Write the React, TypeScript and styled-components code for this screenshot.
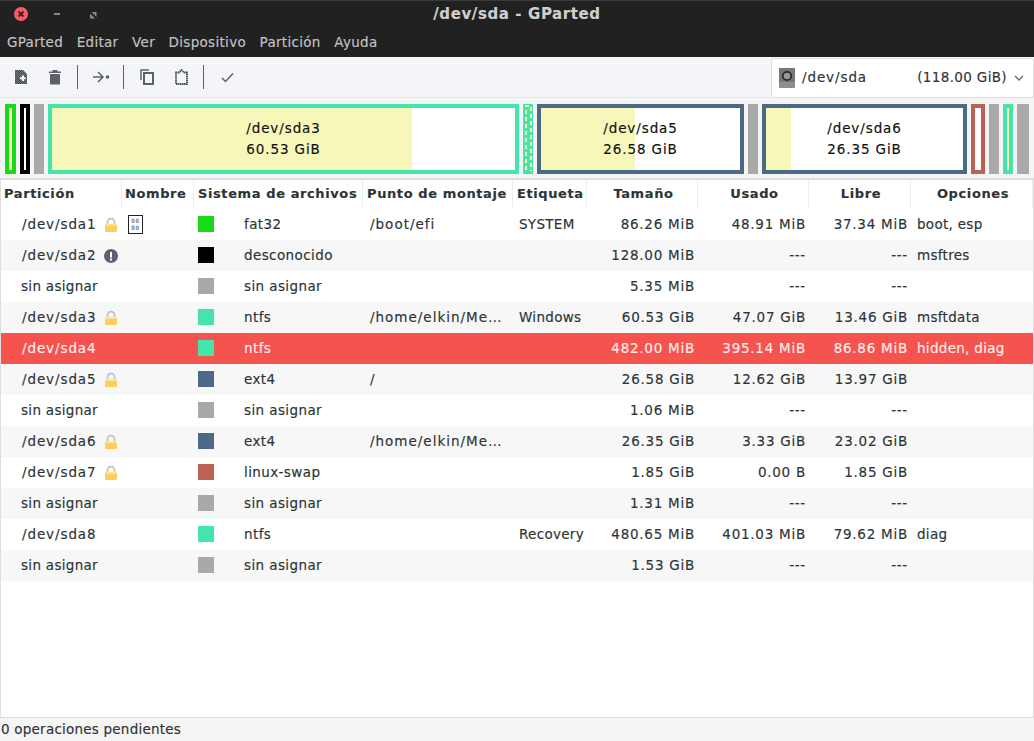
import React from "react";
import styled, { createGlobalStyle } from "styled-components";

const Global = createGlobalStyle`
  html, body { margin: 0; padding: 0; background: #fff; }
  body { font-family: "DejaVu Sans", "Liberation Sans", sans-serif; font-size: 13.5px; color: #2e3436; -webkit-text-stroke: 0.15px; }
  #root { width: 1034px; height: 741px; overflow: hidden; }
`;

const Win = styled.div`
  display: flex; flex-direction: column; width: 1034px; height: 741px; background: #fff;
`;
const TitleBar = styled.div`
  height: 57px; background: #212121; border-top: 1px solid #3a3a3a; box-sizing: border-box;
  display: flex; flex-direction: column; flex: none;
`;
const TitleRow = styled.div`
  position: relative; height: 27px; display: flex; align-items: flex-start; justify-content: center; flex: none;
`;
const Title = styled.div`
  color: #cfcfcf; font-weight: 700; font-size: 15px; letter-spacing: 0.6px; line-height: 24px; margin-top: 1px;
`;
const WinButtons = styled.svg`
  position: absolute; left: 0; top: 0;
`;
const MenuBar = styled.div`
  display: flex; gap: 13.6px; padding: 0 0 2px 7px; height: 29px; box-sizing: border-box; align-items: center;
`;
const MenuItem = styled.span`
  color: #c2c2c2; font-size: 13.5px; letter-spacing: .3px; line-height: 20px;
`;
const Toolbar = styled.div`
  height: 41px; flex: none; box-sizing: border-box; background: #f4f5f8; border-bottom: 1px solid #e3e8ee;
  display: flex; align-items: flex-start; position: relative;
`;
const Tools = styled.div`
  display: flex; align-items: center; height: 40px; padding-left: 4px; flex: 1;
`;
const ToolBtn = styled.div<{ $w: number }>`
  width: ${p => p.$w}px; height: 40px; display: flex; align-items: center; justify-content: center; flex: none;
`;
const ToolSep = styled.div`
  width: 1px; height: 24px; background: #5c616c; flex: none;
`;
const Combo = styled.div`
  width: 263px; height: 40px; margin-top: 1px; box-sizing: border-box; flex: none; background: #fff; border: 1px solid #dfe1e5;
  border-radius: 2px; display: flex; align-items: center; padding: 0 9px 0 7px;
`;
const ComboName = styled.span`
  margin-left: 7px; flex: 1; letter-spacing: .9px; padding-bottom: 2px;
`;
const ComboSize = styled.span`
  margin-right: 7px; letter-spacing: .35px; color: #333; padding-bottom: 2px;
`;
const MapBar = styled.div`
  height: 82px; flex: none; box-sizing: border-box; background: #f5f5f5; border-bottom: 2px solid #dedede;
  display: flex; gap: 4px; padding: 6px 0 0 5px;
`;
const Seg = styled.div<{ $w: number; $c: string }>`
  position: relative; width: ${p => p.$w}px; height: 70px; flex: none; box-sizing: border-box;
  border: 4px solid ${p => p.$c}; background: #fff;
`;
const Free = styled.div<{ $w: number }>`
  width: ${p => p.$w}px; height: 70px; flex: none; background: #a9a9a9;
`;
const Used = styled.div<{ $w: number }>`
  position: absolute; left: 0; top: 0; bottom: 0; width: ${p => p.$w}px; background: #f8f7ba;
`;
const Dotted = styled.div`
  position: absolute; inset: -4px; background:
    linear-gradient(#f8f7ba, #f8f7ba) 2px 1px/4px 2px no-repeat,
    repeating-linear-gradient(to bottom, #f8f7ba 0 4px, #43e5ac 4px 7px) 2px 6px/2px 60px no-repeat,
    repeating-linear-gradient(to bottom, #f8f7ba 0 4px, #43e5ac 4px 7px) 7px 3px/2px 64px no-repeat,
    #43e5ac;
`;
const SegLabel = styled.div`
  position: absolute; inset: 0; display: flex; flex-direction: column; align-items: center; justify-content: center;
  color: #111; line-height: 21px; letter-spacing: .9px;
`;
const Table = styled.div`
  flex: 1; min-height: 0; display: flex; flex-direction: column; background: #fff;
  border-left: 1px solid #dedede; border-right: 1px solid #dedede;
`;
const cols = "121px 72px 169px 150px 74px 111px 111px 102px 122px";
const HeadRow = styled.div`
  display: grid; grid-template-columns: ${cols}; height: 29px; flex: none;
`;
const HeadCell = styled.div<{ $center?: boolean; $pl: number }>`
  display: flex; align-items: center; box-sizing: border-box; padding: 0 0 2px ${p => p.$pl}px; font-weight: 700; font-size: 13px;
  letter-spacing: .6px; color: #2e3436; white-space: nowrap; overflow: hidden;
  border-right: 1px solid #ededed; justify-content: ${p => (p.$center ? "center" : "flex-start")};
`;
const Row = styled.div<{ $alt?: boolean; $sel?: boolean }>`
  display: grid; grid-template-columns: ${cols}; height: 31px; flex: none; align-items: center;
  background: ${p => (p.$sel ? "#f5544e" : p.$alt ? "#f7f7f7" : "#fff")};
  color: ${p => (p.$sel ? "#fdeeee" : "#2e3436")};
`;
const Cell = styled.div<{ $right?: boolean; $path?: boolean }>`
  box-sizing: border-box; white-space: nowrap; overflow: hidden; padding-bottom: 1px;
  letter-spacing: ${p => (p.$right ? ".75px" : p.$path ? "1px" : ".3px")};
  padding-left: ${p => (p.$path ? 7 : 6)}px; padding-right: ${p => (p.$right ? 3 : 0)}px;
  text-align: ${p => (p.$right ? "right" : "left")};
`;
const PartCell = styled.div<{ $path?: boolean }>`
  display: flex; align-items: center; padding: 0 0 1px ${p => (p.$path ? 21 : 20)}px; box-sizing: border-box; position: relative;
  white-space: nowrap; letter-spacing: ${p => (p.$path ? ".9px" : ".3px")};
`;
const PartIcon = styled.span`
  position: absolute; left: 103px; top: 50%; transform: translateY(-50%); display: flex;
`;
const FsCell = styled.div`
  display: flex; align-items: center; padding: 0 0 1px 4px; white-space: nowrap; letter-spacing: .4px;
`;
const Swatch = styled.span<{ $c: string }>`
  width: 16px; height: 16px; background: ${p => p.$c}; flex: none; margin-right: 30px;
`;
const HexBox = styled.div`
  margin-left: 6px; width: 15px; height: 19px; box-sizing: border-box; border: 1px solid #222; background: #fff;
  font-family: "DejaVu Sans Mono", monospace; font-size: 6px; line-height: 7px; text-align: center; color: #444;
  padding-top: 1px; letter-spacing: .6px; -webkit-text-stroke: 0;
`;
const Spacer = styled.div`
  flex: 1; min-height: 0;
`;
const Status = styled.div`
  height: 24px; flex: none; box-sizing: border-box; background: #f5f5f5; border-top: 1px solid #dcdcdc;
  display: flex; align-items: center; padding: 0 0 1px 1px; letter-spacing: .22px; color: #2e3436;
`;

const G = "#5c616c";
const NewIcon = () => (
  <svg width="14" height="16" viewBox="0 0 14 16">
    <defs><pattern id="chk" width="2" height="2" patternUnits="userSpaceOnUse"><rect width="2" height="2" fill="#777b85" /><rect width="1" height="1" fill="#3f434c" /><rect x="1" y="1" width="1" height="1" fill="#3f434c" /></pattern></defs>
    <path d="M1 1h8l4 4v10H1z" fill="url(#chk)" />
    <path d="M6 8.200h2V6.500h2v1.700h1.500v2H10V12H8v-1.800H6z" fill="#fff" />
  </svg>
);
const TrashIcon = () => (
  <svg width="14" height="16" viewBox="0 0 14 16"><path d="M1 2.500h3.500V1h5v1.500H13V4H1z" fill={G} /><path d="M2 5h10v10.500H2z" fill={G} /></svg>
);
const ArrowIcon = () => (
  <svg width="18" height="14" viewBox="0 0 18 14"><path d="M1 7h10M6 2l5 5-5 5" fill="none" stroke={G} strokeWidth="1.500" /><circle cx="15.500" cy="7" r="1.800" fill={G} /></svg>
);
const CopyIcon = () => (
  <svg width="14" height="16" viewBox="0 0 14 16"><path d="M1 11V1h8" fill="none" stroke={G} strokeWidth="1.500" /><rect x="4" y="4" width="9" height="11" fill="none" stroke={G} strokeWidth="2" /></svg>
);
const PasteIcon = () => (
  <svg width="13" height="16" viewBox="0 0 13 16"><path d="M1 3.500h3L6.500 1 9 3.500h3V15H1z" fill="none" stroke="#4a4e57" strokeWidth="1.800" strokeDasharray="1.500 .5" /></svg>
);
const CheckIcon = () => (
  <svg width="13" height="11" viewBox="0 0 13 11"><path d="M1 6l3.500 3.500L12 1.500" fill="none" stroke={G} strokeWidth="1.500" /></svg>
);
const DriveIcon = () => (
  <svg width="16" height="20" viewBox="0 0 16 20" style={{ flex: "none" }}><rect width="16" height="20" fill="#8f8f8f" /><rect width="16" height="14" fill="#777" /><circle cx="8" cy="8" r="4.200" fill="#999" stroke="#2b2b2b" strokeWidth="1.800" /></svg>
);
const Chevron = () => (
  <svg width="10" height="7" viewBox="0 0 10 7"><path d="M1 1l4 4 4-4" fill="none" stroke="#666" strokeWidth="1.300" /></svg>
);
const Lock = () => (
  <svg width="14" height="15" viewBox="0 0 14 15"><path d="M3.500 7V4.500a3.500 3.500 0 0 1 7 0V7" fill="none" stroke="#c4c4c4" strokeWidth="1.800" /><rect x="1" y="6.500" width="12" height="8" rx="1" fill="#fdcf5a" /><rect x="1" y="6.500" width="12" height="2" fill="#fee39a" /></svg>
);
const Warn = () => (
  <svg width="14" height="14" viewBox="0 0 14 14"><circle cx="7" cy="7" r="7" fill="#5c6070" /><rect x="6" y="3" width="2" height="5.500" fill="#fff" /><rect x="6" y="9.500" width="2" height="2" fill="#fff" /></svg>
);

type R = { p: string; i?: "l" | "w"; hex?: boolean; c: string; fs: string; m?: string; e?: string; s: string; u: string; f: string; o?: string; sel?: boolean };
const D = "---";
const rows: R[] = [
  { p: "/dev/sda1", i: "l", hex: true, c: "#18db18", fs: "fat32", m: "/boot/efi", e: "SYSTEM", s: "86.26 MiB", u: "48.91 MiB", f: "37.34 MiB", o: "boot, esp" },
  { p: "/dev/sda2", i: "w", c: "#000", fs: "desconocido", s: "128.00 MiB", u: D, f: D, o: "msftres" },
  { p: "sin asignar", c: "#a9a9a9", fs: "sin asignar", s: "5.35 MiB", u: D, f: D },
  { p: "/dev/sda3", i: "l", c: "#43e5ac", fs: "ntfs", m: "/home/elkin/Me…", e: "Windows", s: "60.53 GiB", u: "47.07 GiB", f: "13.46 GiB", o: "msftdata" },
  { p: "/dev/sda4", sel: true, c: "#43e5ac", fs: "ntfs", s: "482.00 MiB", u: "395.14 MiB", f: "86.86 MiB", o: "hidden, diag" },
  { p: "/dev/sda5", i: "l", c: "#4c6a85", fs: "ext4", m: "/", s: "26.58 GiB", u: "12.62 GiB", f: "13.97 GiB" },
  { p: "sin asignar", c: "#a9a9a9", fs: "sin asignar", s: "1.06 MiB", u: D, f: D },
  { p: "/dev/sda6", i: "l", c: "#4c6a85", fs: "ext4", m: "/home/elkin/Me…", s: "26.35 GiB", u: "3.33 GiB", f: "23.02 GiB" },
  { p: "/dev/sda7", i: "l", c: "#bb6256", fs: "linux-swap", s: "1.85 GiB", u: "0.00 B", f: "1.85 GiB" },
  { p: "sin asignar", c: "#a9a9a9", fs: "sin asignar", s: "1.31 MiB", u: D, f: D },
  { p: "/dev/sda8", c: "#43e5ac", fs: "ntfs", e: "Recovery", s: "480.65 MiB", u: "401.03 MiB", f: "79.62 MiB", o: "diag" },
  { p: "sin asignar", c: "#a9a9a9", fs: "sin asignar", s: "1.53 GiB", u: D, f: D },
];

const heads: [string, boolean, number][] = [["Partición", false, 3], ["Nombre", false, 3], ["Sistema de archivos", false, 4], ["Punto de montaje", false, 4], ["Etiqueta", false, 4], ["Tamaño", true, 3], ["Usado", true, 3], ["Libre", true, 3], ["Opciones", true, 3]];

export default function App() {
  return (
    <Win>
      <Global />
      <TitleBar>
        <TitleRow>
          <WinButtons width="110" height="27" viewBox="0 0 110 27">
            <circle cx="21" cy="13" r="7" fill="#fb5a62" />
            <path d="M18.500 10.500l5 5m0-5l-5 5" stroke="#3a2024" strokeWidth="1.800" />
            <rect x="54" y="12" width="6" height="2" fill="#8a8a8a" />
            <path d="M91.500 11H96.500V16zM90 12.500V17.500H95z" fill="#8a8a8a" />
          </WinButtons>
          <Title>/dev/sda - GParted</Title>
        </TitleRow>
        <MenuBar>
          {["GParted", "Editar", "Ver", "Dispositivo", "Partición", "Ayuda"].map(m => <MenuItem key={m}>{m}</MenuItem>)}
        </MenuBar>
      </TitleBar>
      <Toolbar>
        <Tools>
          <ToolBtn $w={34}><NewIcon /></ToolBtn>
          <ToolBtn $w={34}><TrashIcon /></ToolBtn>
          <ToolBtn $w={5} />
          <ToolSep />
          <ToolBtn $w={45}><ArrowIcon /></ToolBtn>
          <ToolSep />
          <ToolBtn $w={46}><CopyIcon /></ToolBtn>
          <ToolBtn $w={22}><PasteIcon /></ToolBtn>
          <ToolBtn $w={11} />
          <ToolSep />
          <ToolBtn $w={46}><CheckIcon /></ToolBtn>
        </Tools>
        <Combo>
          <DriveIcon />
          <ComboName>/dev/sda</ComboName>
          <ComboSize>(118.00 GiB)</ComboSize>
          <Chevron />
        </Combo>
      </Toolbar>
      <MapBar>
        <Seg $w={11} $c="#18db18"><Used $w={3} /></Seg>
        <Seg $w={10} $c="#000" />
        <Free $w={10} />
        <Seg $w={471} $c="#43e5ac"><Used $w={360} /><SegLabel><span>/dev/sda3</span><span>60.53 GiB</span></SegLabel></Seg>
        <Seg $w={10} $c="#43e5ac"><Dotted /></Seg>
        <Seg $w={207} $c="#4c6a85"><Used $w={94} /><SegLabel><span>/dev/sda5</span><span>26.58 GiB</span></SegLabel></Seg>
        <Free $w={10} />
        <Seg $w={205} $c="#4c6a85"><Used $w={25} /><SegLabel><span>/dev/sda6</span><span>26.35 GiB</span></SegLabel></Seg>
        <Seg $w={14} $c="#bb6256" />
        <Free $w={10} />
        <Seg $w={10} $c="#43e5ac"><Used $w={2} /></Seg>
        <Free $w={12} />
      </MapBar>
      <Table>
        <HeadRow>
          {heads.map(([h, c, pl]) => <HeadCell key={h} $center={c} $pl={pl}>{h}</HeadCell>)}
        </HeadRow>
        {rows.map((r, i) => (
          <Row key={i} $alt={i % 2 === 1} $sel={r.sel}>
            <PartCell $path={r.p[0] === "/"}>{r.p}{r.i && <PartIcon>{r.i === "l" ? <Lock /> : <Warn />}</PartIcon>}</PartCell>
            <div>{r.hex && <HexBox>00<br />80</HexBox>}</div>
            <FsCell><Swatch $c={r.c} />{r.fs}</FsCell>
            <Cell $path>{r.m}</Cell>
            <Cell>{r.e}</Cell>
            <Cell $right>{r.s}</Cell>
            <Cell $right>{r.u}</Cell>
            <Cell $right>{r.f}</Cell>
            <Cell>{r.o}</Cell>
          </Row>
        ))}
        <Spacer />
      </Table>
      <Status>0 operaciones pendientes</Status>
    </Win>
  );
}
